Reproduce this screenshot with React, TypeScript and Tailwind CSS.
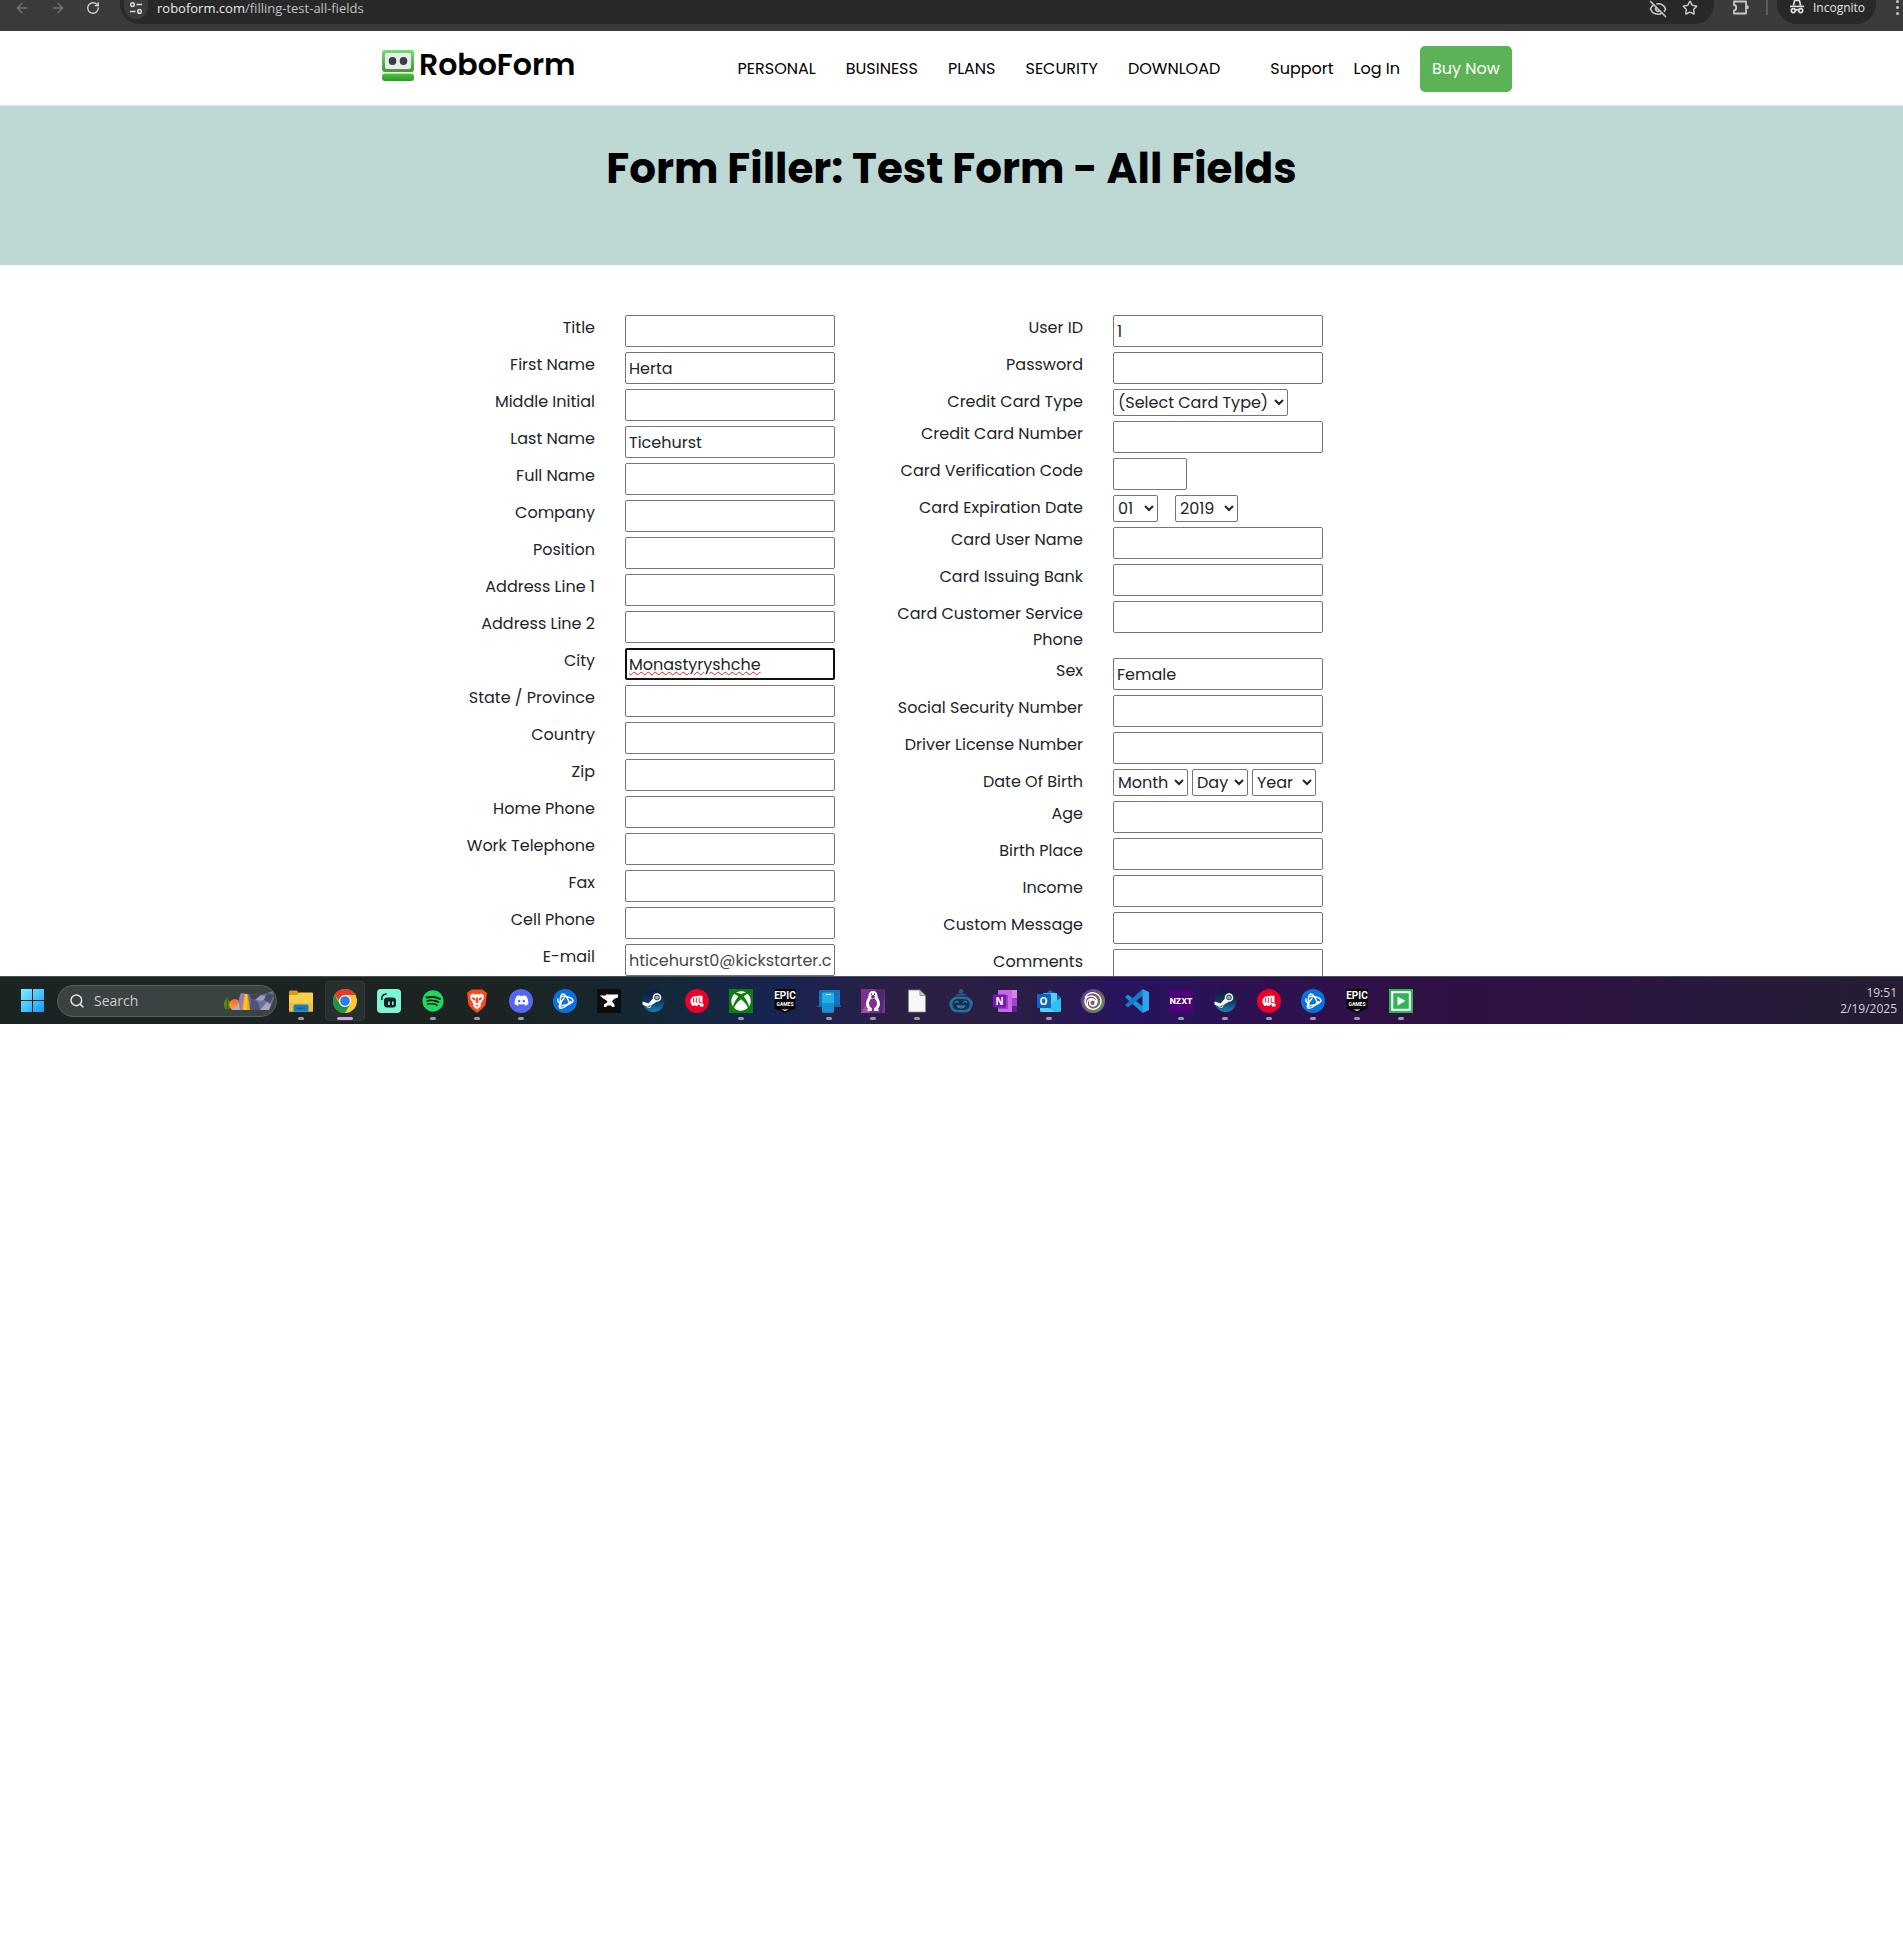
import React, { useId } from "react";
import { ArrowLeft, ArrowRight, EyeOff, RotateCw, Search, Star } from "lucide-react";
import { FaDiscord, FaSpotify, FaXbox } from "react-icons/fa6";
import { SiUbisoft } from "react-icons/si";

/* ---------- browser bar ---------- */

function TuneIcon() {
  return (
    <svg viewBox="0 0 14 14" className="size-3.5" fill="none" stroke="#dedede" strokeWidth="1.5">
      <circle cx="3.5" cy="3.6" r="1.8" />
      <path d="M7.5 3.6H13M1 10.4H6.5" />
      <circle cx="10.5" cy="10.4" r="1.8" />
    </svg>
  );
}

function ExtensionIcon() {
  return (
    <svg viewBox="0 0 18 18" className="size-[18px]" fill="none" stroke="#c7c7c7" strokeWidth="1.8">
      <path d="M2 1.5H14V13.5H2V10.5C5 10.3 5 5.2 2 5Z" strokeLinejoin="round" />
      <path d="M14.5 5C17.5 5 17.5 9.5 14.5 9.5Z" fill="#c7c7c7" stroke="none" />
    </svg>
  );
}

function IncognitoIcon() {
  return (
    <svg viewBox="0 0 16 16" className="size-4" fill="none" stroke="#e3e3e3" strokeWidth="1.6">
      <path d="M1 6.4H15" />
      <path d="M4.4 5.5L5.6 0.5H10.4L11.6 5.5" />
      <circle cx="4.3" cy="10.6" r="2" />
      <circle cx="11.7" cy="10.6" r="2" />
      <path d="M6.3 10.3C7.2 9.6 8.8 9.6 9.7 10.3" />
    </svg>
  );
}

function BrowserBar() {
  return (
    <div className="flex h-[31px] items-start bg-[#3b3b3b] font-['Open_Sans',sans-serif]">
      <div className="flex w-[120px] shrink-0 gap-5 pl-3.5">
        <button aria-label="Back" className="text-[#757575]">
          <ArrowLeft className="size-4" strokeWidth={2} />
        </button>
        <button aria-label="Forward" className="text-[#757575]">
          <ArrowRight className="size-4" strokeWidth={2} />
        </button>
        <button aria-label="Reload" className="text-[#cfcfcf]">
          <RotateCw className="size-3.5" strokeWidth={2.4} />
        </button>
      </div>
      <div className="flex h-6 flex-1 items-start rounded-b-[20px] bg-[#282828]">
        <button
          aria-label="Site information"
          className="ml-1 flex h-[19px] w-6 items-center justify-center rounded-b-full bg-[#3b3b3b] pb-1"
        >
          <TuneIcon />
        </button>
        <p className="ml-[9px] flex-1 text-[13px] leading-4 text-[#c0c0c0]">
          <span className="text-[#e8e8e8]">roboform.com</span>/filling-test-all-fields
        </p>
        <div className="flex gap-[15px] pr-4 text-[#c7c7c7]">
          <EyeOff className="size-[18px]" strokeWidth={2.2} />
          <Star className="size-4" strokeWidth={2.2} />
        </div>
      </div>
      <div className="flex w-[63px] shrink-0 items-start pl-[18px]">
        <button aria-label="Extensions">
          <ExtensionIcon />
        </button>
        <span className="ml-4 h-[15px] border-l-2 border-[#5c5c5c]" />
      </div>
      <div className="flex h-6 w-[99px] shrink-0 items-start gap-2 rounded-b-[20px] bg-[#282828] pl-3">
        <IncognitoIcon />
        <span className="text-xs leading-[15px] text-[#e3e3e3]">Incognito</span>
      </div>
      <button aria-label="Menu" className="ml-5 flex w-[7px] shrink-0 flex-col gap-[3px]">
        <i className="block size-[3px] rounded-full bg-[#c7c7c7]" />
        <i className="block size-[3px] rounded-full bg-[#c7c7c7]" />
        <i className="block size-[3px] rounded-full bg-[#c7c7c7]" />
      </button>
    </div>
  );
}

/* ---------- site header ---------- */

function RobotMark() {
  return (
    <svg viewBox="0 0 32 31" className="h-[31px] w-8">
      <defs>
        <linearGradient id="rim" x1="0" y1="0" x2="0" y2="1">
          <stop offset="0" stopColor="#6fe06c" />
          <stop offset="1" stopColor="#3f9a36" />
        </linearGradient>
        <linearGradient id="jaw" x1="0" y1="0" x2="0" y2="1">
          <stop offset="0" stopColor="#4fc63f" />
          <stop offset="1" stopColor="#2a9a20" />
        </linearGradient>
      </defs>
      <rect width="32" height="22" rx="3" fill="url(#rim)" />
      <rect x="3" y="3" width="26" height="16" rx="2" fill="#ececec" />
      <ellipse cx="10.5" cy="11" rx="3.8" ry="4" fill="#3b4044" />
      <ellipse cx="21.5" cy="11" rx="3.8" ry="4" fill="#3b4044" />
      <rect y="23.5" width="32" height="7.5" rx="3" fill="url(#jaw)" />
    </svg>
  );
}

const mainLinks = ["PERSONAL", "BUSINESS", "PLANS", "SECURITY", "DOWNLOAD"];

function SiteHeader() {
  return (
    <header className="border-b border-[#e3e6e6] bg-white">
      <div className="mx-auto flex h-[74px] max-w-[1141px] items-center pt-0.5 pr-[10px] pl-px text-black">
        <a href="#home" className="mb-2 flex items-center gap-[5px]">
          <RobotMark />
          <span className="text-[30px] leading-8 font-semibold">RoboForm</span>
        </a>
        <nav className="ml-auto flex items-center text-base">
          <div className="mr-[50px] flex gap-[30px]">
            {mainLinks.map((l) => (
              <a key={l} href={"#" + l.toLowerCase()}>
                {l}
              </a>
            ))}
          </div>
          <div className="flex items-center gap-5">
            <a href="#support">Support</a>
            <a href="#login">Log In</a>
            <a
              href="#buy"
              className="flex h-[46px] w-[92px] items-center justify-center rounded-[5px] bg-[#5cb257] text-white"
            >
              Buy Now
            </a>
          </div>
        </nav>
      </div>
    </header>
  );
}

/* ---------- form ---------- */

const boxClass = "rounded-[2px] border border-[#767676] bg-white";

function Row({ label, id, children }: { label: string; id: string; children: React.ReactNode }) {
  return (
    <div className="flex items-start gap-[30px]">
      <label htmlFor={id} className="w-[194px] text-right leading-[26px]">
        {label}
      </label>
      {children}
    </div>
  );
}

type FieldProps = { label: string; value?: string; variant?: "focused" | "short" | "cut" | "muted" };

function Field({ label, value, variant }: FieldProps) {
  const id = useId();
  const look =
    variant === "focused"
      ? "h-8 w-[210px] rounded-[2px] border-2 border-[#101010] px-0.5 text-[#212529] underline decoration-[#e02020] decoration-wavy decoration-1 underline-offset-1"
      : variant === "short"
        ? `h-8 w-[74px] px-[3px] ${boxClass}`
        : variant === "cut"
          ? "h-[27px] w-[210px] rounded-t-[2px] border border-b-0 border-[#767676]"
          : variant === "muted"
            ? `h-8 w-[210px] px-[3px] text-[#484848] ${boxClass}`
            : `h-8 w-[210px] px-[3px] text-[#212529] ${boxClass}`;
  return (
    <Row label={label} id={id}>
      <input id={id} type="text" defaultValue={value} className={look} />
    </Row>
  );
}

function Picker({ id, text, name, className }: { id?: string; text: string; name?: string; className: string }) {
  return (
    <select id={id} aria-label={name} className={`h-[27px] text-[#212529] ${boxClass} ${className}`}>
      <option>{text}</option>
    </select>
  );
}

const leftFields: FieldProps[] = [
  { label: "Title" },
  { label: "First Name", value: "Herta" },
  { label: "Middle Initial" },
  { label: "Last Name", value: "Ticehurst" },
  { label: "Full Name" },
  { label: "Company" },
  { label: "Position" },
  { label: "Address Line 1" },
  { label: "Address Line 2" },
  { label: "City", value: "Monastyryshche", variant: "focused" },
  { label: "State / Province" },
  { label: "Country" },
  { label: "Zip" },
  { label: "Home Phone" },
  { label: "Work Telephone" },
  { label: "Fax" },
  { label: "Cell Phone" },
  { label: "E-mail", value: "hticehurst0@kickstarter.com", variant: "muted" },
];

function TestForm() {
  return (
    <form className="mx-auto flex max-w-[1141px] pt-[50px] pl-5 text-base text-[#212529]">
      <div className="flex w-[488px] flex-col gap-[5px]">
        {leftFields.map((f) => (
          <Field key={f.label} {...f} />
        ))}
      </div>
      <div className="flex flex-1 flex-col gap-[5px]">
        <Field label="User ID" value="1" />
        <Field label="Password" />
        <Row label="Credit Card Type" id="card-type">
          <Picker id="card-type" text="(Select Card Type)" className="w-[175px]" />
        </Row>
        <Field label="Credit Card Number" />
        <Field label="Card Verification Code" variant="short" />
        <Row label="Card Expiration Date" id="exp-month">
          <div className="flex gap-[17px]">
            <Picker id="exp-month" text="01" className="w-[45px]" />
            <Picker name="Expiration year" text="2019" className="w-[63px]" />
          </div>
        </Row>
        <Field label="Card User Name" />
        <Field label="Card Issuing Bank" />
        <Field label="Card Customer Service Phone" />
        <Field label="Sex" value="Female" />
        <Field label="Social Security Number" />
        <Field label="Driver License Number" />
        <Row label="Date Of Birth" id="birth-month">
          <div className="flex gap-1">
            <Picker id="birth-month" text="Month" className="w-[75px]" />
            <Picker name="Birth day" text="Day" className="w-14" />
            <Picker name="Birth year" text="Year" className="w-16" />
          </div>
        </Row>
        <Field label="Age" />
        <Field label="Birth Place" />
        <Field label="Income" />
        <Field label="Custom Message" />
        <Field label="Comments" variant="cut" />
      </div>
    </form>
  );
}

/* ---------- taskbar icons ---------- */

function Art({ children }: { children: React.ReactNode }) {
  return (
    <svg viewBox="0 0 24 24" className="size-6">
      {children}
    </svg>
  );
}

function WindowsLogo() {
  return (
    <svg viewBox="0 0 23 23" className="size-[23px]">
      <defs>
        <linearGradient id="win" x1="0" y1="0" x2="1" y2="1">
          <stop offset="0" stopColor="#7df0ff" />
          <stop offset="1" stopColor="#109cf5" />
        </linearGradient>
      </defs>
      <path d="M0 0H11V11H0ZM12 0H23V11H12ZM0 12H11V23H0ZM12 12H23V23H12Z" fill="url(#win)" />
    </svg>
  );
}

function SearchScene() {
  return (
    <svg viewBox="0 0 50 20" className="h-5 w-[50px]">
      <path d="M3 6L0 12L1 18H5L6 11Z" fill="#6a8a14" />
      <path d="M3.5 5V19" stroke="#3f5a10" strokeWidth="1.5" />
      <path d="M7 18A5.5 5.500 0 1 1 16 13L15 19Z" fill="#f7941d" />
      <path d="M6.500 12.500A5 5 0 0 1 16 12Z" fill="#ff6b3d" />
      <path d="M7 19L15 13L20 16L24 19Z" fill="#b9a8cf" />
      <path d="M15 8L17 2L24 3L37 4L49 0L50 8L45 19H16Z" fill="#6c7196" />
      <path d="M15 8L17 2L21 3L19 19H16Z" fill="#8f7fae" />
      <path d="M25 3L37 4L31 9L27 8Z" fill="#3c4262" />
      <path d="M37 4L43 6L38 10L31 9Z" fill="#9da0b8" />
      <path d="M27 8L34 11L36 19H26Z" fill="#4d5478" />
      <path d="M43 2L50 4L46 12L40 9Z" fill="#474d6b" />
      <path d="M36 19L43 11L47 14L45 19Z" fill="#a7a3c0" />
      <path d="M20.5 3H23.5L26 19H18Z" fill="#ffa800" />
      <path d="M21.5 3H23L23 19H20Z" fill="#ffc629" />
    </svg>
  );
}

function Explorer() {
  return (
    <Art>
      <path d="M0 3A1.5 1.5 0 0 1 1.5 1.500H8L10.500 4.500V7H0Z" fill="#d99a10" />
      <path d="M0 6H8L10.500 3.500H23A1 1 0 0 1 24 4.500V22.500H0Z" fill="#fccf4d" />
      <path d="M0 14H24V22.500H0Z" fill="#f6bf3a" />
      <path d="M4.500 22.500V17A1.500 1.500 0 0 1 6 15.500H18A1.500 1.500 0 0 1 19.500 17V22.500Z" fill="#0f7fd0" />
      <path d="M8 19.200H16" stroke="#0a5a9c" strokeWidth="1.3" />
    </Art>
  );
}

function Chrome() {
  return (
    <Art>
      <circle cx="12" cy="12" r="12" fill="#fcc934" />
      <path d="M12 12H6.500L1.600 6A12 12 0 0 1 22.400 6H12Z" fill="#e33b2e" />
      <path d="M1.600 6A12 12 0 0 0 12 24L17.200 15L12 12L6.800 15Z" fill="#1e9447" />
      <circle cx="12" cy="12" r="6" fill="#fff" />
      <circle cx="12" cy="12" r="4.800" fill="#2f7de9" />
    </Art>
  );
}

function Streamlabs() {
  return (
    <Art>
      <rect width="24" height="24" rx="4" fill="#80f5d2" />
      <rect x="7" y="8.500" width="12" height="10" rx="3.200" fill="#0a2029" />
      <path d="M4.800 10.500C4.500 7.500 6 5.500 9 5" fill="none" stroke="#0a2029" strokeWidth="1.6" strokeLinecap="round" />
      <path d="M12 12.500V16M15.800 12.500V16" stroke="#80f5d2" strokeWidth="1.6" />
    </Art>
  );
}

function Badge({ tone, children }: { tone: string; children: React.ReactNode }) {
  return <span className={`flex size-6 items-center justify-center ${tone}`}>{children}</span>;
}

function Fist() {
  return (
    <Art>
      <circle cx="12" cy="12" r="12" fill="#ea0029" />
      <path
        d="M5.500 10.500L8 7.500H10L10.300 7H12.800L13.200 6.800H17.500V14.500L18.500 15V17.500H15L14.500 15.500H13L12.500 17H10.500L10 15.500L9 17H7.500L5.500 14Z"
        fill="#fff"
      />
      <path d="M8.600 9V13.500M11.300 8.500V14M14.200 8.500V13.500L17 14" stroke="#ea0029" strokeWidth="0.9" fill="none" />
    </Art>
  );
}

function Epic() {
  return (
    <span className="relative flex size-6 items-center justify-center">
      <svg viewBox="0 0 24 24" className="absolute inset-0 size-6">
        <path d="M1.500 0H22.500V19.500L12 24L1.500 19.500Z" fill="#070707" />
        <path d="M8.500 20.500H15.500L12 22Z" fill="#fff" />
      </svg>
      <span className="relative mb-1 flex flex-col items-center font-['Liberation_Sans_Narrow','Roboto',sans-serif] font-bold text-white">
        <span className="text-[10px] leading-[12px]">EPIC</span>
        <span className="text-[5px] leading-[5px]">GAMES</span>
      </span>
    </span>
  );
}

function PhoneLink() {
  return (
    <Art>
      <rect x="2" y="1" width="21" height="16" rx="1" fill="#1473bd" />
      <path d="M0 16.500H24V18H0Z" fill="#1b5f9c" />
      <rect x="5" y="3.500" width="12" height="20" rx="1.5" fill="#27aee8" />
      <path d="M5 14H17V22A1.500 1.500 0 0 1 15.500 23.500H6.500A1.500 1.500 0 0 1 5 22Z" fill="#168fd4" />
      <path d="M9 5.500H14" stroke="#bfeeff" strokeWidth="1" />
    </Art>
  );
}

function Penguin() {
  return (
    <Art>
      <rect width="24" height="24" fill="#81308f" />
      <path d="M15 0H24L21 24H19Z" fill="#4c2a72" />
      <path d="M0 24L7 13L9 24Z" fill="#a251ae" />
      <path
        d="M12 2C9 2 7.500 4 7.500 7C7.500 9 5 11 5 14.500C5 17 6 19 7.500 20H6.500V22H10.800V19C8.800 18.300 8 16.500 8 14C8 12 9.500 11 10 9.500H14C14.500 11 16 12 16 14C16 16.500 15.200 18.300 13.200 19V22H17.500V20H16.500C18 19 19 17 19 14.500C19 11 16.500 9 16.500 7C16.500 4 15 2 12 2Z"
        fill="#fff"
      />
      <circle cx="12" cy="7.800" r="1.8" fill="#6b2a80" />
      <path d="M10 4.500H11V6H10ZM13 4.500H14V6H13Z" fill="#6b2a80" />
    </Art>
  );
}

function Page() {
  return (
    <Art>
      <path d="M3.500 1H15L20.500 6.500V23H3.500Z" fill="#f7f7f7" stroke="#8b8b80" strokeWidth="0.8" />
      <path d="M15 1V6.500H20.500Z" fill="#cfcfcf" stroke="#77776c" strokeWidth="0.8" />
    </Art>
  );
}

function Robot() {
  return (
    <Art>
      <circle cx="12" cy="2.200" r="2.200" fill="#2b5c8c" />
      <path d="M6 6.500C7 4 17 4 18 6.500Z" fill="#2b5c8c" />
      <rect x="0" y="11" width="24" height="7" rx="3" fill="#1f5f8a" />
      <rect x="1" y="7.500" width="22" height="16" rx="7" fill="#1d739c" />
      <rect x="3.500" y="10" width="17" height="11" rx="5" fill="#1d2c55" />
      <path d="M6 13.800C6.500 12 9 12 9.500 13.800M14.500 13.800C15 12 17.500 12 18 13.800M8.500 17H15.500C14.500 19.500 9.500 19.500 8.500 17Z" fill="none" stroke="#2583ac" strokeWidth="1.3" />
    </Art>
  );
}

function Office({ letter, children }: { letter: string; children: React.ReactNode }) {
  return (
    <Art>
      {children}
      <text x="6.500" y="15.500" textAnchor="middle" fontSize="10" fontWeight="700" fill="#fff" fontFamily="Open Sans, sans-serif">
        {letter}
      </text>
    </Art>
  );
}

function OneNote() {
  return (
    <Office letter="N">
      <rect x="5" y="1" width="19" height="22" rx="1" fill="#c869e8" />
      <path d="M19 1H24V9H19Z" fill="#d685f0" />
      <path d="M19 9H24V17H19Z" fill="#a33fc8" />
      <path d="M19 17H24V23H19Z" fill="#6a1a92" />
      <path d="M13 6H15V20H5V18H13Z" fill="#9a45b8" />
      <rect y="5.500" width="13" height="13" rx="1" fill="#7719aa" />
    </Office>
  );
}

function Outlook() {
  return (
    <Office letter="O">
      <path d="M3 9L13 1L24 8V22A1.500 1.500 0 0 1 22.500 23H4.500A1.500 1.500 0 0 1 3 22Z" fill="#1267b0" />
      <path d="M6 4H20V14H6Z" fill="#35a9ea" />
      <path d="M13 4H20V12L13 16Z" fill="#5ccbf5" />
      <path d="M24 9L9 17.500V23H22.500A1.500 1.500 0 0 0 24 21.500Z" fill="#2fc0f0" />
      <path d="M3 15L18 23H4.500A1.500 1.500 0 0 1 3 21.500Z" fill="#55d4fa" />
      <rect y="5" width="14" height="14" rx="1" fill="#0f64c0" />
    </Office>
  );
}

function VsCode() {
  return (
    <Art>
      <path d="M17.500 24L18 17.500L3.200 5.700L0.500 7.200V8.500Z" fill="#1b8fdc" />
      <path d="M17.500 0L18 6.500L3.200 18.300L0.500 16.800V15.500Z" fill="#0f7cc4" />
      <path d="M17.500 0L24 3V21L17.500 24Z" fill="#2aa6f0" />
    </Art>
  );
}

function Nzxt() {
  return (
    <span className="flex size-6 items-center justify-center bg-[#4f0078] font-['Inter',sans-serif] text-[8px] leading-none font-extrabold text-white">
      NZXT
    </span>
  );
}

function PlayTile() {
  return (
    <Art>
      <rect width="24" height="24" fill="#2fb457" />
      <rect x="3.200" y="3.200" width="17.600" height="17.600" fill="none" stroke="#fff" strokeWidth="2" />
      <path d="M8.500 7.500L16.500 12L8.500 16.500Z" fill="#fff" />
    </Art>
  );
}

function Spotify() {
  return (
    <Badge tone="text-[#1ed760]">
      <span className="flex size-[22px] items-center justify-center rounded-full bg-[#0c1a12]">
        <FaSpotify className="size-[22px]" />
      </span>
    </Badge>
  );
}

function Brave() {
  return (
    <Art>
      <path d="M6.500 0.500H17.500L22 4L20.500 16L16 21L12 24L8 21L3.500 16L2 4Z" fill="#fb4a1d" />
      <path
        d="M5 6.200L8 4.500L10 5.500L12 5L14 5.500L16 4.500L19 6.200L18.500 10L15.500 15L16 17L12 20.500L8 17L8.500 15L5.500 10Z"
        fill="#fff"
      />
      <path
        d="M6.500 8L10 9L10.500 11.500L8 11ZM17.500 8L14 9L13.500 11.500L16 11ZM11.200 8.500H12.800L13.500 13L12 14.500L10.500 13ZM9.500 15.500L12 16.300L14.500 15.500L12 17.800Z"
        fill="#fb4a1d"
      />
    </Art>
  );
}

function Discord() {
  return (
    <Badge tone="rounded-full bg-[#5865f2] text-white">
      <FaDiscord className="size-[15px]" />
    </Badge>
  );
}

function BattleNet() {
  return (
    <Art>
      <circle cx="12" cy="12" r="12" fill="#0a72e0" />
      <g fill="none" stroke="#fff" strokeWidth="1.5" strokeLinecap="round" strokeLinejoin="round">
        <path d="M8 17.500C6 11 8 5 10 5C12 5 15.500 10 16.500 15" />
        <path d="M9 7.500C14 7 20 9 20 11.500C20 13.500 14 16.500 9.500 16.500" />
        <path d="M17.500 12.500C14 17.500 8 20.500 6.500 18.500C5.500 17 8 12.500 11 9.500" />
        <path d="M5 10C4 12 6 14 8 15" />
      </g>
    </Art>
  );
}

function Anvil() {
  return (
    <Art>
      <rect width="24" height="24" fill="#0d0d0d" />
      <path
        d="M3 6.500H9V5.500H21V8.500C18.500 9 16.500 10 15 12.500L17.500 15.500V18H15L13.800 16.500H10.500L9 18H7V15.500L10.500 13C10 10.500 6 10.500 3 6.500Z"
        fill="#fff"
      />
    </Art>
  );
}

function Steam() {
  return (
    <Art>
      <defs>
        <linearGradient id="steam" x1="0" y1="0" x2="0" y2="1">
          <stop offset="0" stopColor="#0b1c3d" />
          <stop offset="0.5" stopColor="#12345f" />
          <stop offset="1" stopColor="#1387b8" />
        </linearGradient>
      </defs>
      <circle cx="12.500" cy="12" r="11" fill="url(#steam)" />
      <circle cx="16" cy="8.500" r="3.500" fill="none" stroke="#fff" strokeWidth="1.6" />
      <circle cx="16" cy="8.500" r="2" fill="#fff" fillOpacity="0.6" />
      <path d="M1.500 12.500L7.500 14.500L12 9.500L15.500 13L10.500 16C10.500 19 7 20 5.500 17.500L1.500 15.500Z" fill="#fff" />
      <path d="M6.500 17.500C8 18.500 9.500 17 9 15.800" fill="none" stroke="#12345f" strokeWidth="0.9" />
    </Art>
  );
}

function Xbox() {
  return (
    <Badge tone="bg-[#107c10] text-white">
      <FaXbox className="size-5" />
    </Badge>
  );
}

function Ubisoft() {
  return (
    <Badge tone="rounded-full bg-linear-to-br from-[#4a2a9a] via-[#7d5a68] to-[#2f9a63] text-white">
      <SiUbisoft className="size-[18px]" />
    </Badge>
  );
}

type Task = { name: string; icon: () => React.ReactElement; open?: boolean };

const tasks: Task[] = [
  { name: "Streamlabs", icon: Streamlabs },
  { name: "Spotify", icon: Spotify, open: true },
  { name: "Brave", icon: Brave, open: true },
  { name: "Discord", icon: Discord, open: true },
  { name: "Battle.net", icon: BattleNet },
  { name: "CurseForge", icon: Anvil },
  { name: "Steam", icon: Steam },
  { name: "Fist", icon: Fist },
  { name: "Xbox", icon: Xbox, open: true },
  { name: "Epic Games", icon: Epic },
  { name: "Phone Link", icon: PhoneLink, open: true },
  { name: "Penguin", icon: Penguin, open: true },
  { name: "Document", icon: Page, open: true },
  { name: "Assistant", icon: Robot },
  { name: "OneNote", icon: OneNote },
  { name: "Outlook", icon: Outlook, open: true },
  { name: "Ubisoft", icon: Ubisoft },
  { name: "VS Code", icon: VsCode },
  { name: "NZXT", icon: Nzxt, open: true },
  { name: "Steam client", icon: Steam, open: true },
  { name: "Fist client", icon: Fist, open: true },
  { name: "Battle.net client", icon: BattleNet, open: true },
  { name: "Epic client", icon: Epic, open: true },
  { name: "Player", icon: PlayTile, open: true },
];

function TaskButton({ name, icon: Icon, open, active }: Task & { active?: boolean }) {
  return (
    <button
      aria-label={name}
      className={
        active
          ? "mx-0.5 flex h-10 w-10 flex-col items-center rounded border border-white/5 bg-white/5 pt-[7px]"
          : "mx-0.5 flex h-10 w-10 flex-col items-center pt-2"
      }
    >
      <Icon />
      {active ? (
        <i className="mt-1 block h-[3px] w-4 rounded-full bg-[#dc9be8]" />
      ) : (
        open && <i className="mt-1 block h-[3px] w-1.5 rounded-full bg-[#9a9aa6]" />
      )}
    </button>
  );
}

function Taskbar() {
  return (
    <footer className="flex h-12 items-center border-t border-[#4d5455] bg-[linear-gradient(to_right,#1b2423_0%,#1b2423_27%,#132838_35%,#172452_41%,#2b2044_47%,#2a1d46_54%,#27145e_59%,#2d1150_66%,#2f1145_74%,#2d1242_82%,#27183c_89%,#251d31_100%)] font-['Open_Sans',sans-serif]">
      <button aria-label="Start" className="ml-[21px]">
        <WindowsLogo />
      </button>
      <label className="ml-[13px] flex h-8 w-[220px] items-center rounded-full border border-[#566060] bg-[#3a4342] pr-0.5 pl-[11px]">
        <Search className="size-4 shrink-0 text-[#e6e6e6]" strokeWidth={2.2} />
        <input
          placeholder="Search"
          aria-label="Search"
          className="min-w-0 flex-1 bg-transparent pl-[9px] text-sm text-white placeholder:text-[#c9cccc]"
        />
        <SearchScene />
      </label>
      <div className="ml-[2px] flex">
        <TaskButton name="File Explorer" icon={Explorer} open />
        <TaskButton name="Chrome" icon={Chrome} active />
        {tasks.map((t) => (
          <TaskButton key={t.name} {...t} />
        ))}
      </div>
      <div className="ml-auto pr-1.5 text-right text-xs leading-4 text-[#d5d0da]">
        <p>19:51</p>
        <p>2/19/2025</p>
      </div>
    </footer>
  );
}

export default function App() {
  return (
    <div className="bg-white font-['Poppins','Inter',sans-serif]">
      <BrowserBar />
      <SiteHeader />
      <main>
        <div className="bg-[#bed8d4] pt-[38px] pb-[71px]">
          <h1 className="text-center text-[42px] leading-[50px] font-bold text-black">
            Form Filler: Test Form - All Fields
          </h1>
        </div>
        <TestForm />
      </main>
      <Taskbar />
    </div>
  );
}
